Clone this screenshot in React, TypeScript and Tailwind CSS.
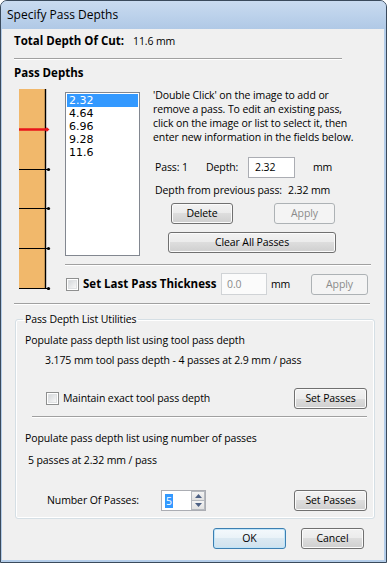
const btn =
  'flex h-[21px] items-center justify-center rounded-[3px] border border-[#707070] bg-[linear-gradient(#f2f2f2,#ebebeb_50%,#dddddd_50%,#cfcfcf)] shadow-[inset_0_0_0_1px_#fbfbfb] text-black'
const btnDisabled =
  'flex h-[21px] items-center justify-center rounded-[3px] border border-[#adb2b5] bg-[#f4f4f4] text-[#8b8b8b]'

const PASSES = ['2.32', '4.64', '6.96', '9.28', '11.6']

function Checkbox() {
  return (
    <span className="flex h-[13px] w-[13px] shrink-0 items-center justify-center border border-[#8e8f8f] bg-white">
      <span className="h-[9px] w-[9px] border border-[#dfe1e3] bg-[linear-gradient(135deg,#d6d9dc,#f7f7f7)]" />
    </span>
  )
}

function Separator({ className }: { className?: string }) {
  return <div className={'h-[2px] border-t border-[#a0a0a0] border-b border-b-white ' + (className ?? '')} />
}

function PassBar() {
  const ticks = [80, 119, 159, 199]
  return (
    <svg width="33" height="201" className="shrink-0">
      <rect x="0" y="0" width="26" height="199" fill="#f1b86b" />
      <line x1="26.5" y1="0" x2="26.5" y2="200" stroke="#000" strokeWidth="1.4" />
      {ticks.map((y) => (
        <g key={y}>
          <line x1="0" y1={y + 0.5} x2="29" y2={y + 0.5} stroke="#000" strokeWidth="1" />
          <circle cx="29.5" cy={y + 0.5} r="1.6" fill="#000" />
        </g>
      ))}
      <line x1="0" y1="40.5" x2="28" y2="40.5" stroke="#e8141a" strokeWidth="2.5" />
      <polygon points="27.5,38 30.5,40.5 27.5,43" fill="#e8141a" />
    </svg>
  )
}

function SpinBox() {
  return (
    <div className="flex h-[21px] w-[45px] border border-[#abadb3] bg-white">
      <div className="flex flex-1 items-center pl-[3px]">
        <span className="bg-[#3399ff] px-px leading-[14px] text-white">5</span>
      </div>
      <div className="flex w-[14px] flex-col">
        <span className="flex flex-1 items-center justify-center border border-[#b5b9bf] bg-[linear-gradient(#f4f4f4,#e1e1e1)]">
          <svg width="7" height="4"><polygon points="0,4 3.5,0 7,4" fill="#4d6185" /></svg>
        </span>
        <span className="flex flex-1 items-center justify-center border border-t-0 border-[#b5b9bf] bg-[linear-gradient(#f4f4f4,#e1e1e1)]">
          <svg width="7" height="4"><polygon points="0,0 3.5,4 7,0" fill="#4d6185" /></svg>
        </span>
      </div>
    </div>
  )
}

export default function App() {
  return (
    <div className="flex h-[563px] w-[387px] flex-col overflow-hidden rounded-t-[7px] border border-[#3a4a5c] bg-[#b4cde9] font-['Open_Sans',sans-serif] text-[10.5px] leading-none tracking-[-0.1px] text-black">
      <div className="flex h-[28px] shrink-0 items-center bg-[linear-gradient(#c9dbf0,#b0c9e6)] pl-[6px] text-[12px] tracking-normal">
        Specify Pass Depths
      </div>

      <div className="mb-[2px] ml-px mr-[2px] flex flex-1 flex-col bg-[#f0f0f0] pl-[12px] pt-[4px]">
        <div className="flex h-[16px] items-center whitespace-nowrap">
          <span className="w-[119px] text-[11.5px] font-bold tracking-normal">Total Depth Of Cut:</span>
          <span>11.6 mm</span>
        </div>

        <Separator className="mt-[9px] w-[328px]" />

        <div className="mt-[5px] flex h-[16px] items-center text-[11.5px] font-bold tracking-normal">Pass Depths</div>

        <div className="mt-[8px] flex items-start">
          <div className="ml-[5px]">
            <PassBar />
          </div>

          <div className="ml-[13px] flex flex-col">
            <div className="flex items-start">
              <div className="mt-[3px] h-[164px] w-[75px] border border-[#828790] bg-white p-px font-['DejaVu_Sans',sans-serif] text-[11px] tracking-normal">
                {PASSES.map((p, i) => (
                  <div
                    key={p}
                    className={
                      'flex h-[13px] items-center pl-[2px] ' + (i === 0 ? 'bg-[#3399ff] text-white' : 'text-black')
                    }
                  >
                    {p}
                  </div>
                ))}
              </div>

              <div className="ml-[13px] -mt-px flex w-[218px] flex-col whitespace-nowrap">
                <div className="leading-[14px]">
                  'Double Click' on the image to add or
                  <br />
                  remove a pass. To edit an existing pass,
                  <br />
                  click on the image or list to select it, then
                  <br />
                  enter new information in the fields below.
                </div>

                <div className="mt-[13px] flex h-[21px] items-center pl-[2px]">
                  <span className="w-[51px]">Pass: 1</span>
                  <span className="w-[42px]">Depth:</span>
                  <div className="flex h-[21px] w-[47px] items-center border border-[#abadb3] bg-white pl-[6px]">2.32</div>
                  <span className="ml-[18px]">mm</span>
                </div>

                <div className="mt-[5px] flex h-[14px] items-center pl-[2px]">
                  <span className="w-[133px]">Depth from previous pass:</span>
                  <span>2.32 mm</span>
                </div>

                <div className="mt-[6px] flex">
                  <div className={btn + ' ml-[18px] w-[62px]'}>Delete</div>
                  <div className={btnDisabled + ' ml-[41px] w-[61px]'}>Apply</div>
                </div>

                <div className={btn + ' ml-[15px] mt-[8px] w-[168px]'}>Clear All Passes</div>
              </div>
            </div>

            <Separator className="mt-[8px] w-[306px]" />

            <div className="mt-[7px] flex h-[22px] items-center whitespace-nowrap">
              <span className="ml-px">
                <Checkbox />
              </span>
              <span className="ml-[4px] w-[138px] text-[11.5px] font-bold tracking-normal">Set Last Pass Thickness</span>
              <div className="flex h-[22px] w-[46px] items-center border border-[#d0d3d6] bg-[#fbfbfb] pl-[5px] text-[#8b8b8b]">
                0.0
              </div>
              <span className="ml-[4px] w-[40px]">mm</span>
              <div className={btnDisabled + ' w-[57px]'}>Apply</div>
            </div>
          </div>
        </div>

        <Separator className="mt-[8px] w-[356px]" />

        <fieldset className="ml-px mt-[6px] w-[359px] whitespace-nowrap rounded-[3px] border border-[#d5dfe5] pb-[7px] pl-[9px] pr-[7px] shadow-[inset_0_0_0_1px_#ffffff]">
          <legend className="-ml-[2px] px-[2px] leading-[16px]">Pass Depth List Utilities</legend>

          <div className="mt-[6px] flex h-[14px] items-center">Populate pass depth list using tool pass depth</div>
          <div className="mt-[6px] flex h-[14px] items-center pl-[20px]">
            3.175 mm tool pass depth - 4 passes at 2.9 mm / pass
          </div>

          <div className="mt-[21px] flex h-[21px] items-center">
            <span className="ml-[21px]">
              <Checkbox />
            </span>
            <span className="ml-[4px]">Maintain exact tool pass depth</span>
            <div className={btn + ' ml-auto w-[73px]'}>Set Passes</div>
          </div>

          <Separator className="ml-[7px] mt-[7px] w-[335px]" />

          <div className="mt-[13px] flex h-[14px] items-center">Populate pass depth list using number of passes</div>
          <div className="mt-[8px] flex h-[14px] items-center pl-[3px]">5 passes at 2.32 mm / pass</div>

          <div className="mt-[23px] flex h-[21px] items-center">
            <span className="ml-[22px] w-[114px]">Number Of Passes:</span>
            <SpinBox />
            <div className={btn + ' ml-auto w-[73px]'}>Set Passes</div>
          </div>
        </fieldset>

        <div className="mt-[9px] flex">
          <div
            className={
              'ml-[199px] flex h-[21px] w-[73px] items-center justify-center rounded-[3px] border border-[#3c7fb1] bg-[linear-gradient(#f4f9fc,#e9f2f8_50%,#dbe9f2_50%,#cfe2ee)] shadow-[inset_0_0_0_1px_#bfe4f9]'
            }
          >
            OK
          </div>
          <div className={btn + ' ml-[15px] w-[63px]'}>Cancel</div>
        </div>
      </div>
    </div>
  )
}
